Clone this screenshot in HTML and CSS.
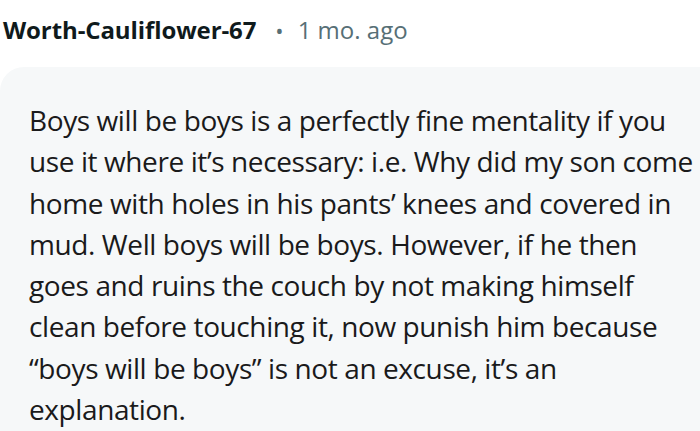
FILE: index.html
```html
<!DOCTYPE html>
<html>
<head>
<meta charset="utf-8">
<link rel="stylesheet" href="styles.css">
</head>
<body>
<div class="comment">
  <div class="meta">
    <span class="author">Worth-Cauliflower-67</span>
    <span class="dot">•</span>
    <span class="time">1 mo. ago</span>
  </div>
  <div class="bubble">
    <p class="text">Boys will be boys is a perfectly fine mentality if you<br>
use it where it’s necessary: i.e. Why did my son come<br>
home with holes in his pants’ knees and covered in<br>
mud. Well boys will be boys. However, if he then<br>
goes and ruins the couch by not making himself<br>
clean before touching it, now punish him because<br>
“boys will be boys” is not an excuse, it’s an<br>
explanation.</p>
  </div>
</div>
</body>
</html>
```
FILE: styles.css
```css
html, body {
  margin: 0;
  padding: 0;
  background: #ffffff;
}
body {
  width: 700px;
  height: 431px;
  overflow: hidden;
  font-family: "Open Sans", "Noto Sans", sans-serif;
  color: #1c1c1c;
}
.comment {
  display: flex;
  flex-direction: column;
  height: 431px;
}
.meta {
  box-sizing: border-box;
  display: flex;
  align-items: center;
  flex: 0 0 67px;
  padding: 0 0 8px 3px;
  font-size: 24px;
}
.author {
  font-weight: 700;
  color: #0f1a1c;
  letter-spacing: -0.1px;
}
.dot {
  color: #576f76;
  font-size: 22px;
  margin: 0 14px 0 19px;
}
.time {
  color: #576f76;
}
.bubble {
  box-sizing: border-box;
  flex: 1 1 auto;
  min-height: 0;
  overflow: hidden;
  background: #f6f8f9;
  border-top-left-radius: 24px;
  padding: 33px 0 0 29px;
}
.text {
  margin: 0;
  font-size: 28px;
  line-height: 41.3px;
  color: #1a1a1b;
  letter-spacing: -0.4px;
  white-space: nowrap;
}
```
